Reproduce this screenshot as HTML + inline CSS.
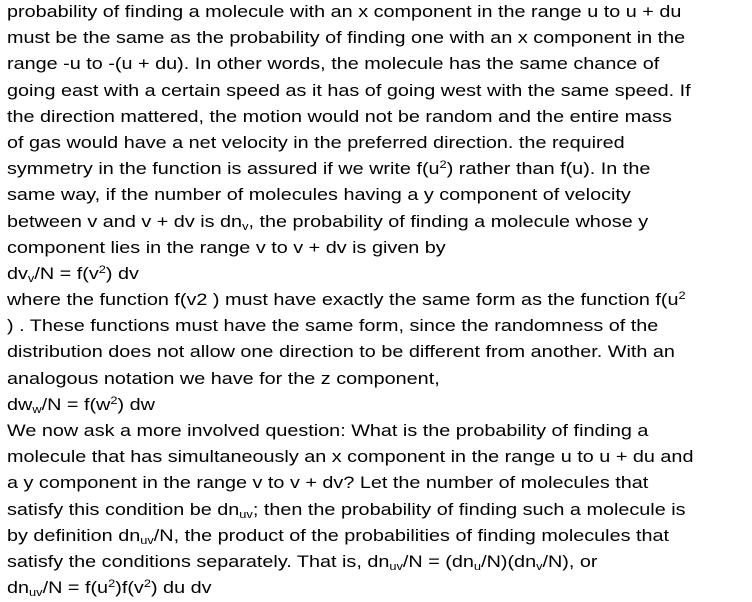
<!DOCTYPE html>
<html><head><meta charset="utf-8"><style>
html,body{margin:0;padding:0;background:#fff;}
body{width:752px;height:602px;overflow:hidden;}
.t{position:absolute;left:7px;top:-1px;font-family:"Liberation Sans",sans-serif;font-size:17px;line-height:26.2px;color:#000;transform:scaleX(1.165);transform-origin:0 0;}
.t div{white-space:nowrap;height:26.2px;}
sub{font-size:11px;vertical-align:-3px;line-height:0;}
sup{font-size:11px;vertical-align:6px;line-height:0;}
</style></head><body><div class="t">
<div>probability of finding a molecule with an x component in the range u to u + du</div>
<div>must be the same as the probability of finding one with an x component in the</div>
<div>range -u to -(u + du). In other words, the molecule has the same chance of</div>
<div>going east with a certain speed as it has of going west with the same speed. If</div>
<div>the direction mattered, the motion would not be random and the entire mass</div>
<div>of gas would have a net velocity in the preferred direction. the required</div>
<div>symmetry in the function is assured if we write f(u<sup>2</sup>) rather than f(u). In the</div>
<div>same way, if the number of molecules having a y component of velocity</div>
<div>between v and v + dv is dn<sub>v</sub>, the probability of finding a molecule whose y</div>
<div>component lies in the range v to v + dv is given by</div>
<div>dv<sub>v</sub>/N = f(v<sup>2</sup>) dv</div>
<div>where the function f(v2 ) must have exactly the same form as the function f(u<sup>2</sup></div>
<div>) . These functions must have the same form, since the randomness of the</div>
<div>distribution does not allow one direction to be different from another. With an</div>
<div>analogous notation we have for the z component,</div>
<div>dw<sub>w</sub>/N = f(w<sup>2</sup>) dw</div>
<div>We now ask a more involved question: What is the probability of finding a</div>
<div>molecule that has simultaneously an x component in the range u to u + du and</div>
<div>a y component in the range v to v + dv? Let the number of molecules that</div>
<div>satisfy this condition be dn<sub>uv</sub>; then the probability of finding such a molecule is</div>
<div>by definition dn<sub>uv</sub>/N, the product of the probabilities of finding molecules that</div>
<div>satisfy the conditions separately. That is, dn<sub>uv</sub>/N = (dn<sub>u</sub>/N)(dn<sub>v</sub>/N), or</div>
<div>dn<sub>uv</sub>/N = f(u<sup>2</sup>)f(v<sup>2</sup>) du dv</div>
</div></body></html>
